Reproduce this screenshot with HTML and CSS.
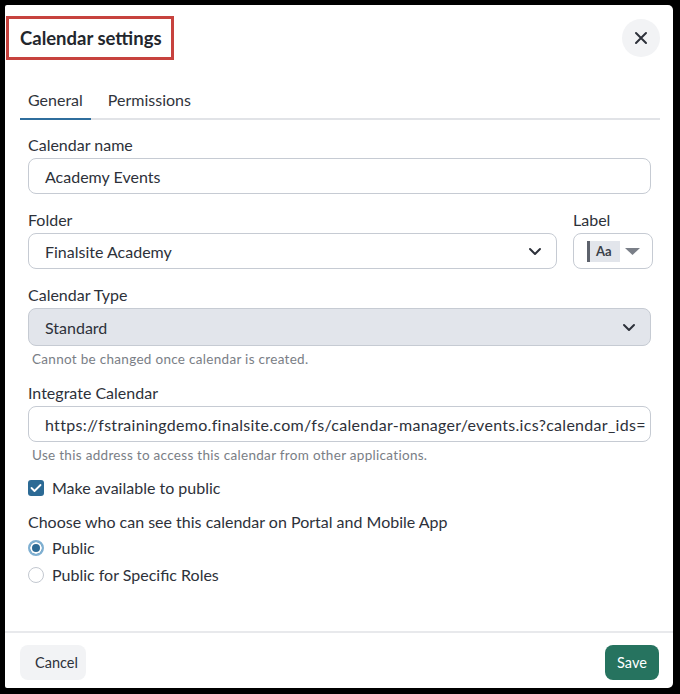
FILE: index.html
```html
<!DOCTYPE html>
<html>
<head>
<meta charset="utf-8">
<link rel="stylesheet" href="styles.css">
</head>
<body>
<div class="dialog">
  <div class="header">
    <div class="title-box"><h1 class="title">Calendar settings</h1></div>
    <button class="close" aria-label="Close">
      <svg width="14" height="14" viewBox="0 0 14 14"><path d="M2 2 L12 12 M12 2 L2 12" stroke="#2d313a" stroke-width="2" stroke-linecap="round"/></svg>
    </button>
  </div>
  <div class="tabs">
    <div class="tab active">General</div>
    <div class="tab">Permissions</div>
  </div>
  <div class="body">
    <div class="field">
      <div class="label">Calendar name</div>
      <div class="input">Academy Events</div>
    </div>
    <div class="row">
      <div class="field grow">
        <div class="label">Folder</div>
        <div class="input select">
          <span>Finalsite Academy</span>
          <svg class="chev" width="14" height="9" viewBox="0 0 14 9"><path d="M2 2 L7 7 L12 2" fill="none" stroke="#2d313a" stroke-width="2" stroke-linecap="round" stroke-linejoin="round"/></svg>
        </div>
      </div>
      <div class="field labelfield">
        <div class="label">Label</div>
        <div class="input labelsel">
          <span class="aa"><span class="bar"></span><span class="aa-text">Aa</span></span>
          <svg width="15" height="7" viewBox="0 0 15 7"><path d="M0 0 L15 0 L7.5 7 Z" fill="#7a7f88"/></svg>
        </div>
      </div>
    </div>
    <div class="field">
      <div class="label">Calendar Type</div>
      <div class="input select disabled">
        <span>Standard</span>
        <svg class="chev" width="14" height="9" viewBox="0 0 14 9"><path d="M2 2 L7 7 L12 2" fill="none" stroke="#2d313a" stroke-width="2" stroke-linecap="round" stroke-linejoin="round"/></svg>
      </div>
      <div class="help">Cannot be changed once calendar is created.</div>
    </div>
    <div class="field">
      <div class="label">Integrate Calendar</div>
      <div class="input url">https://fstrainingdemo.finalsite.com/fs/calendar-manager/events.ics?calendar_ids=</div>
      <div class="help">Use this address to access this calendar from other applications.</div>
    </div>
    <label class="check">
      <span class="box"><svg width="12" height="10" viewBox="0 0 12 10"><path d="M1.5 5 L4.5 8 L10.5 2" fill="none" stroke="#fff" stroke-width="1.8" stroke-linecap="round" stroke-linejoin="round"/></svg></span>
      <span>Make available to public</span>
    </label>
    <div class="question">Choose who can see this calendar on Portal and Mobile App</div>
    <div class="radio"><span class="dot on"></span><span>Public</span></div>
    <div class="radio second"><span class="dot"></span><span>Public for Specific Roles</span></div>
  </div>
  <div class="footer">
    <button class="btn cancel">Cancel</button>
    <button class="btn save">Save</button>
  </div>
</div>
</body>
</html>
```
FILE: styles.css
```css
* { box-sizing: border-box; }
html, body { margin: 0; padding: 0; }
body {
  background: #000;
  font-family: "Lato", "Open Sans", sans-serif;
  color: #2d313a;
  font-size: 16px;
}
.dialog {
  margin: 5px 7px 6px 5px;
  height: 683px;
  background: #fff;
  border-radius: 2px 5px 5px 2px;
  display: flex;
  flex-direction: column;
}
.header {
  height: 66px;
  display: flex;
  align-items: center;
  justify-content: space-between;
  padding: 0 13px 0 1px;
}
.title-box {
  height: 44px;
  width: 168px;
  border: 3px solid #c7423e;
  display: flex;
  align-items: center;
  padding-left: 11px;
}
.title {
  margin: 0;
  font-size: 18.5px;
  font-weight: 700;
  color: #23262d;
}
.close {
  width: 38px;
  height: 38px;
  border-radius: 50%;
  border: none;
  background: #f2f3f5;
  display: flex;
  align-items: center;
  justify-content: center;
  padding: 0;
}
.tabs {
  margin: 19px 13px 0 15px;
  display: flex;
  gap: 9px;
  border-bottom: 2px solid #e1e3e7;
}
.tab {
  padding: 0 8px 8px;
  line-height: 20px;
  font-size: 16px;
  color: #30343c;
  margin-bottom: -2px;
  border-bottom: 2px solid transparent;
}
.tab.active { border-bottom-color: #2f6e9d; }
.body {
  flex: 1;
  padding: 15px 22px 0 23px;
}
.field { margin-bottom: 16px; }
.row { display: flex; gap: 16px; }
.grow { flex: 1; }
.labelfield { margin-right: -2px; }
.label {
  line-height: 20px;
  margin-bottom: 3px;
}
.input {
  height: 36px;
  border: 1px solid #c6cbd3;
  border-radius: 8px;
  padding: 0 16px;
  display: flex;
  align-items: center;
  font-size: 16px;
  color: #2d313a;
  white-space: nowrap;
  overflow: hidden;
}
.select { justify-content: space-between; padding-right: 14px; }
.disabled { background: #e2e5eb; height: 38px; }
.url { letter-spacing: 0.29px; }
.labelsel {
  width: 80px;
  padding: 0 12px 0 13px;
  justify-content: space-between;
}
.aa {
  display: flex;
  align-items: stretch;
  height: 21px;
  background: #e2e5eb;
}
.bar { width: 3px; background: #5d626c; }
.aa-text {
  font-size: 13px;
  font-weight: 700;
  color: #3a3f48;
  padding: 0 8px 0 6px;
  line-height: 21px;
}
.help {
  font-size: 13.5px;
  letter-spacing: 0.3px;
  color: #7a7e86;
  line-height: 16px;
  margin-top: 5px;
  padding-left: 4px;
}
.check {
  display: flex;
  align-items: center;
  gap: 8px;
  line-height: 20px;
  margin: -1px 0 14px 0;
}
.box {
  width: 16px;
  height: 16px;
  border-radius: 3px;
  background: #2c6a95;
  display: flex;
  align-items: center;
  justify-content: center;
}
.question {
  line-height: 20px;
  margin: 0 0 6px 0;
}
.radio {
  display: flex;
  align-items: center;
  gap: 8px;
  line-height: 20px;
}
.radio.second { margin-top: 7px; }
.dot {
  width: 16px;
  height: 16px;
  border-radius: 50%;
  border: 1px solid #c3c8d0;
  background: #fff;
}
.dot.on {
  border: 2px solid #7fb0d2;
  background: #2c6a95;
  box-shadow: inset 0 0 0 2px #fff;
}
.footer {
  height: 57px;
  border-top: 2px solid #e8e9ec;
  display: flex;
  align-items: center;
  justify-content: space-between;
  padding: 3px 14px 0 15px;
}
.btn {
  height: 35px;
  border: none;
  border-radius: 8px;
  font-family: inherit;
  font-size: 14.5px;
  padding: 0 15px;
}
.cancel { background: #f2f3f5; color: #2d313a; width: 66px; }
.save { background: #26735f; color: #fff; width: 54px; padding: 0; }
```
